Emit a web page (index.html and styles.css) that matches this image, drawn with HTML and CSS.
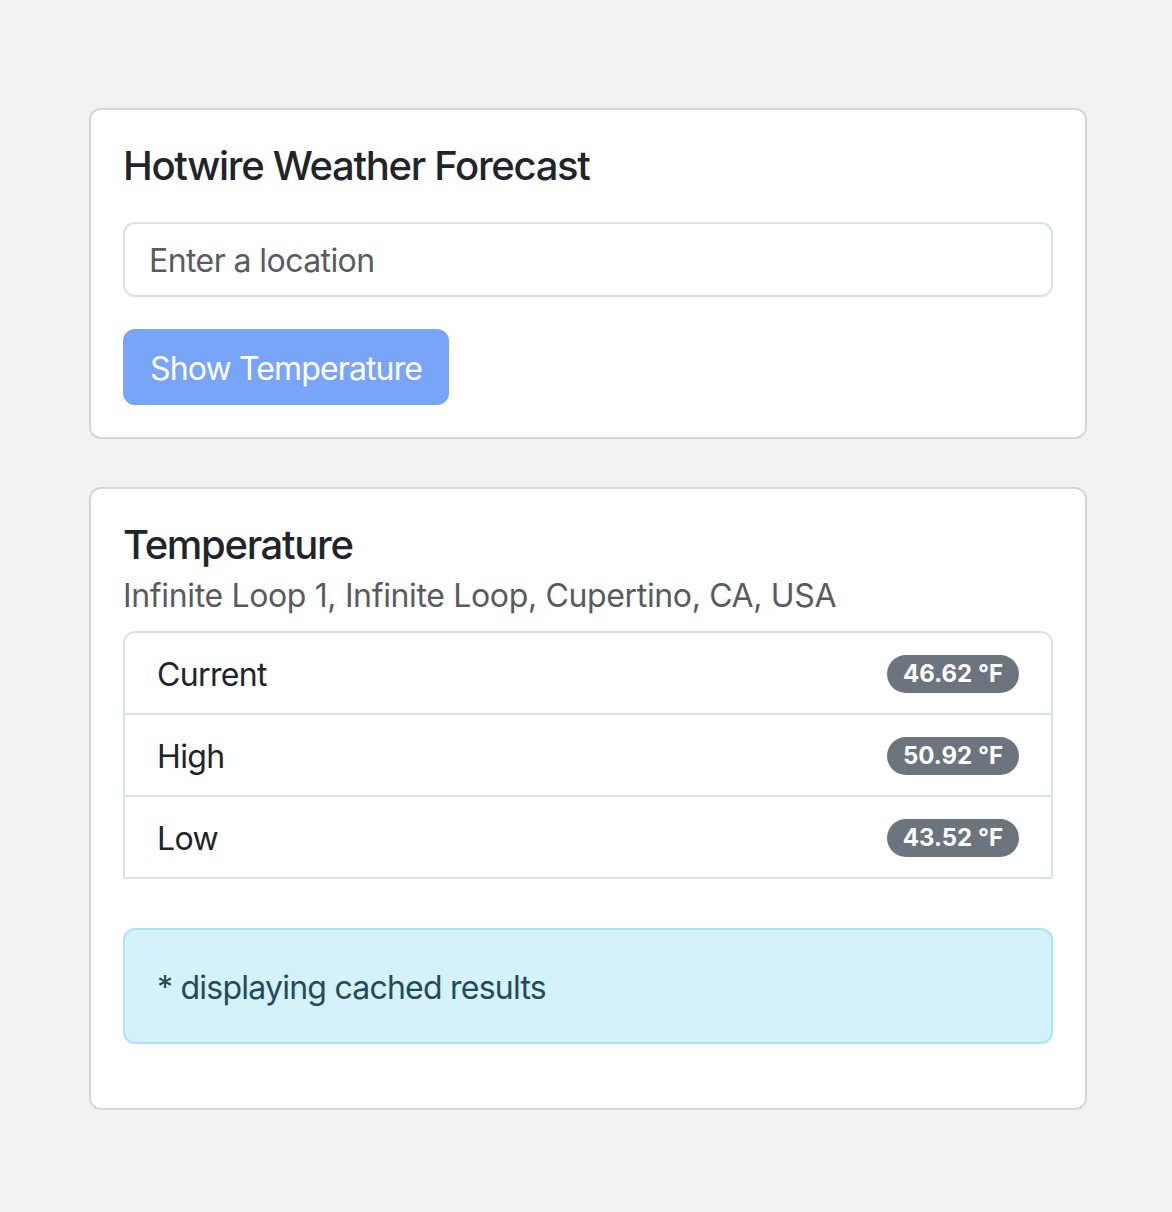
FILE: index.html
```html
<!DOCTYPE html>
<html lang="en">
<head>
<meta charset="utf-8">
<title>Hotwire Weather Forecast</title>
<link rel="stylesheet" href="styles.css">
</head>
<body>
<main class="container">
  <section class="card">
    <div class="card-body">
      <h5 class="card-title title-spaced">Hotwire Weather Forecast</h5>
      <form class="search-form">
        <input class="form-control" type="text" placeholder="Enter a location">
        <button class="btn btn-primary" type="button" disabled>Show Temperature</button>
      </form>
    </div>
  </section>

  <section class="card card-results">
    <div class="card-body">
      <h5 class="card-title">Temperature</h5>
      <p class="card-subtitle">Infinite Loop 1, Infinite Loop, Cupertino, CA, USA</p>
      <ul class="list-group">
        <li class="list-group-item"><span>Current</span><span class="badge">46.62 °F</span></li>
        <li class="list-group-item"><span>High</span><span class="badge">50.92 °F</span></li>
        <li class="list-group-item"><span>Low</span><span class="badge">43.52 °F</span></li>
      </ul>
      <div class="alert alert-info">* displaying cached results</div>
    </div>
  </section>
</main>
</body>
</html>
```
FILE: styles.css
```css
* { box-sizing: border-box; }

html, body {
  margin: 0;
  padding: 0;
}

body {
  background: #f2f2f2;
  font-family: Inter, "Noto Sans", "Liberation Sans", sans-serif;
  color: #212529;
  font-size: 32px;
  line-height: 1.5;
  letter-spacing: -0.02em;
}

.container {
  width: 998px;
  margin: 0 0 0 89px;
  padding-top: 108px;
}

.card {
  background: #fff;
  border: 2px solid #d6d6d6;
  border-radius: 12px;
}

.card-results {
  margin-top: 48px;
}

.card-body {
  padding: 32px;
}

.card-title {
  margin: 0;
  font-size: 40px;
  font-weight: 500;
  line-height: 1.2;
  letter-spacing: -0.033em;
}

.title-spaced {
  margin-bottom: 32px;
}

.search-form {
  display: flex;
  flex-direction: column;
  align-items: flex-start;
  gap: 32px;
}

.form-control {
  width: 100%;
  height: 75px;
  padding: 2px 24px 0;
  font: inherit;
  font-size: 32px;
  letter-spacing: -0.018em;
  color: #212529;
  background: #fff;
  border: 2px solid #dee2e6;
  border-radius: 12px;
  outline: none;
}

.form-control::placeholder {
  color: #585c61;
  opacity: 1;
}

.btn {
  font: inherit;
  font-size: 32px;
  letter-spacing: -0.027em;
  line-height: 48px;
  padding: 14px 25px 10px;
  border: 2px solid transparent;
  border-radius: 12px;
}

.btn-primary {
  background: #78a5f8;
  border-color: #78a5f8;
  color: #fff;
}

.card-subtitle {
  margin: 0 0 12px;
  padding-top: 4px;
  font-size: 32px;
  line-height: 46px;
  letter-spacing: -0.011em;
  color: #585c61;
}

.list-group {
  list-style: none;
  margin: 0;
  padding: 0;
  border: 2px solid #dee2e6;
  border-radius: 12px 12px 0 0;
}

.list-group-item {
  display: flex;
  justify-content: space-between;
  align-items: center;
  padding: 18px 32px 14px;
  line-height: 48px;
}

.list-group-item + .list-group-item {
  border-top: 2px solid #dee2e6;
}

.badge {
  display: inline-block;
  background: #6c757d;
  color: #fff;
  font-size: 24px;
  font-weight: 700;
  line-height: 1;
  letter-spacing: 0;
  padding: 7px 16px;
  border-radius: 999px;
  transform: translateY(-1px);
}

.alert {
  margin: 49px 0 32px;
  padding: 34px 32px 30px;
  border: 2px solid #a9e5f5;
  border-radius: 12px;
  letter-spacing: -0.024em;
}

.alert-info {
  background: #d5f1f9;
  color: #1f4c5c;
}
```
